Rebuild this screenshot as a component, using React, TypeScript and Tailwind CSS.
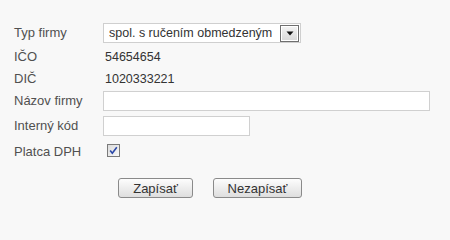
export default function App() {
  return (
    <div className="min-h-screen w-full bg-[#f8f8f8] pt-[23px] font-['Liberation_Sans',Arial,sans-serif] text-[13px] text-[#505050]">
      {/* Typ firmy */}
      <div className="flex h-5 items-center">
        <span className="w-[103px] pl-[14px]">Typ firmy</span>
        <div className="flex h-5 w-[198px] items-center border border-[#cfcfcf] bg-white pl-[5px] pr-[1px] text-[12.5px] text-[#333]">
          <span className="flex-1 truncate">spol. s ručením obmedzeným</span>
          <span className="flex h-[17px] w-[19px] items-center justify-center border border-[#6f6f6f] bg-gradient-to-b from-[#f4f4f4] to-[#d8d8d8] shadow-[inset_0_0_0_1px_#fff]">
            <svg width="8" height="5" viewBox="0 0 8 5">
              <path d="M0.5 0.5h7l-3.5 4z" fill="#111" />
            </svg>
          </span>
        </div>
      </div>

      {/* IČO */}
      <div className="mt-1 flex h-5 items-center">
        <span className="w-[105px] pl-[14px]">IČO</span>
        <span className="text-[12.5px] text-[#333]">54654654</span>
      </div>

      {/* DIČ */}
      <div className="mt-[2px] flex h-5 items-center">
        <span className="w-[105px] pl-[14px]">DIČ</span>
        <span className="text-[12.5px] text-[#333]">1020333221</span>
      </div>

      {/* Názov firmy */}
      <div className="mt-[2px] flex h-5 items-center">
        <span className="w-[103px] pl-[14px]">Názov firmy</span>
        <input className="h-5 w-[327px] border border-[#d0d0d0] bg-white outline-none" />
      </div>

      {/* Interný kód */}
      <div className="mt-[5px] flex h-5 items-center">
        <span className="w-[103px] pl-[14px]">Interný kód</span>
        <input className="h-5 w-[147px] border border-[#d0d0d0] bg-white outline-none" />
      </div>

      {/* Platca DPH */}
      <div className="mt-1 flex h-5 items-center">
        <span className="w-[107px] pl-[14px] pt-[3px]">Platca DPH</span>
        <span className="flex h-[13px] w-[13px] items-center justify-center border border-[#7a7a7a] bg-gradient-to-br from-[#dcdcdc] to-[#f8f8f8]">
          <svg width="9" height="9" viewBox="0 0 9 9">
            <path d="M1.2 4.6l2.1 2.6L7.8 1.2" fill="none" stroke="#2a47a8" strokeWidth="1.6" />
          </svg>
        </span>
      </div>

      {/* Buttons */}
      <div className="mt-[18px] flex gap-[20px] pl-[118px]">
        <button className="h-5 w-[75px] rounded-[3px] border border-[#8a8a8a] bg-gradient-to-b from-[#fdfdfd] to-[#dedede] text-[13px] text-[#333]">
          Zapísať
        </button>
        <button className="h-5 w-[89px] rounded-[3px] border border-[#8a8a8a] bg-gradient-to-b from-[#fdfdfd] to-[#dedede] text-[13px] text-[#333]">
          Nezapísať
        </button>
      </div>
    </div>
  );
}
